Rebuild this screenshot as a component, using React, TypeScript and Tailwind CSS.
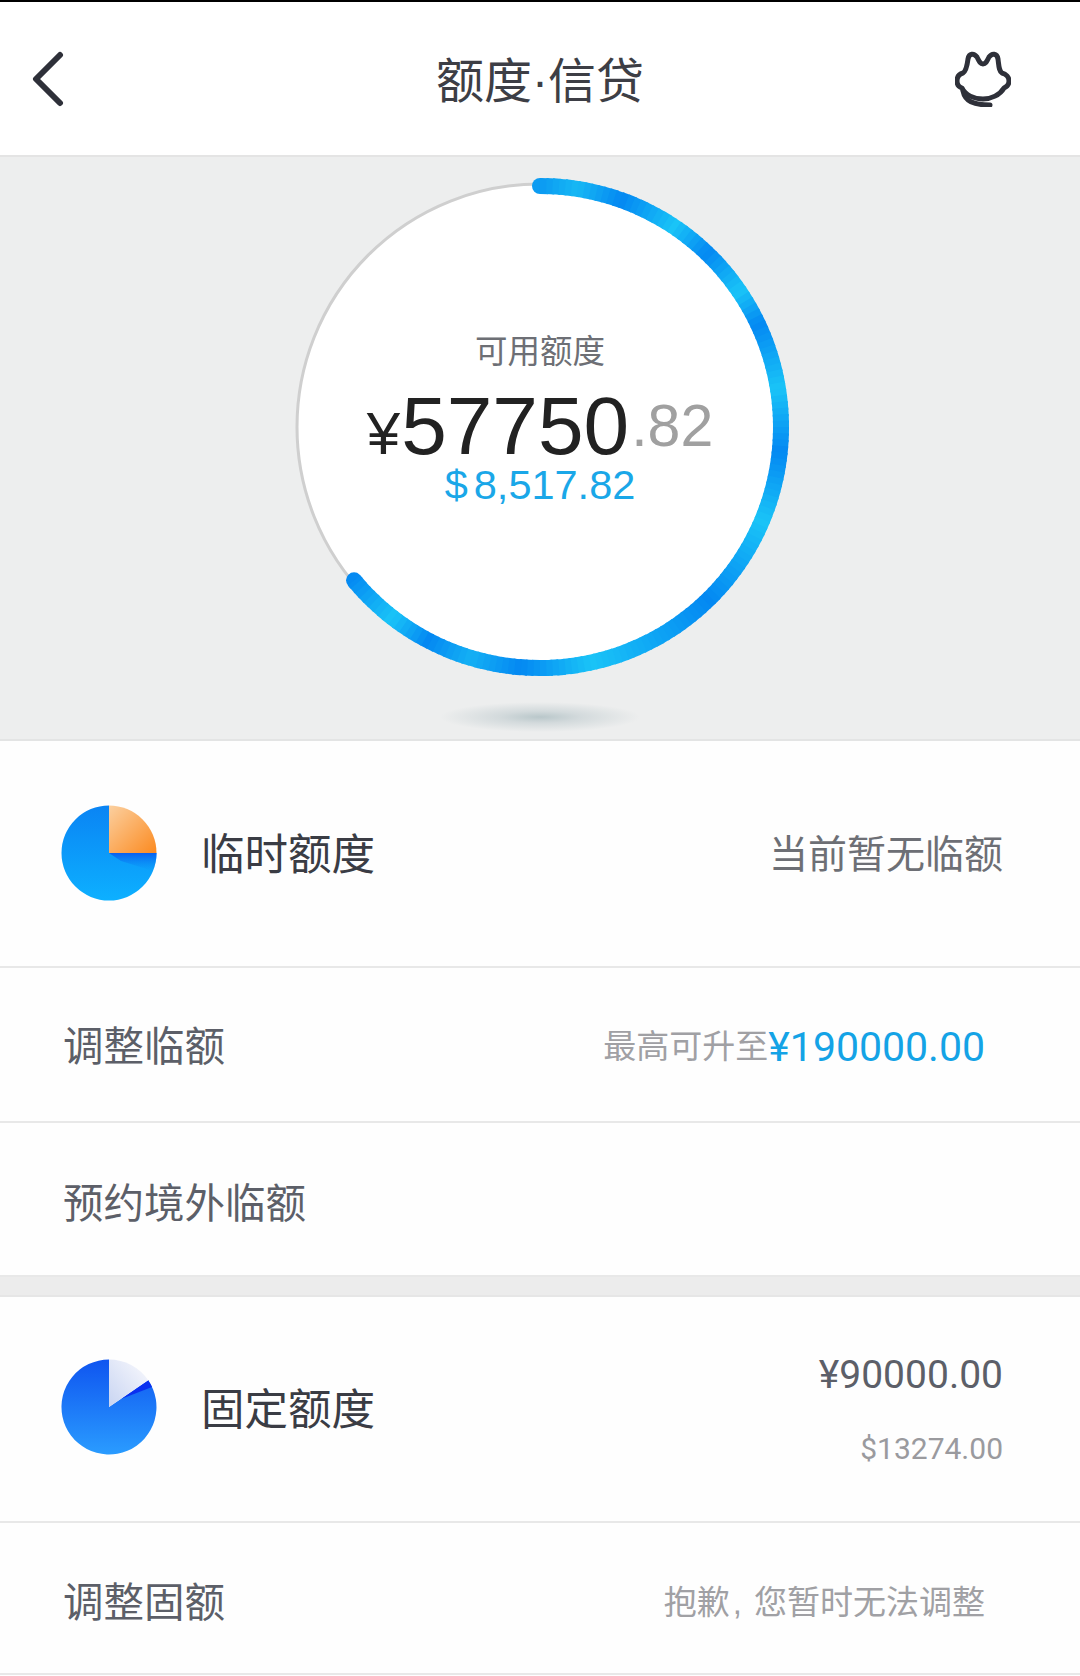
import React from 'react';

const cx = 270;
const cy = 270;
const r = 241;
const endAngle = 230.5;

// colour stops along the progress arc, angle in degrees from 12 o'clock
const stops: [number, string][] = [
    [0, '#0c9cf2'], [8, '#17b8f4'], [19, '#0488f2'], [33, '#1ac4f7'], [43, '#0488f2'], [55, '#1ac4f7'], [64, '#0488f2'],
    [80, '#1ac4f7'], [95, '#0488f2'], [112, '#1ac4f7'], [135, '#0488f2'], [167, '#1ac4f7'], [184, '#0488f2'],
    [196, '#14b0f4'], [207, '#0488f2'], [217, '#1ac4f7'], [231, '#0488f2'],
];

const hex = (c: string) => [1, 3, 5].map(i => parseInt(c.slice(i, i + 2), 16));

const colourAt = (a: number) => {
    for (let i = 1; i < stops.length; i++) {
        if (a <= stops[i][0]) {
            const t = (a - stops[i - 1][0]) / (stops[i][0] - stops[i - 1][0]);
            const c0 = hex(stops[i - 1][1]);
            const c1 = hex(stops[i][1]);
            return `rgb(${c0.map((v, k) => Math.round(v + (c1[k] - v) * t)).join(',')})`;
        }
    }
    return stops[stops.length - 1][1];
};

const point = (deg: number) => {
    const rad = (deg * Math.PI) / 180;
    return `${cx + r * Math.sin(rad)} ${cy - r * Math.cos(rad)}`;
};

const Ring: React.FC = () => {
    const segments = [];
    for (let a = 0; a < endAngle; a += 1.5) {
        segments.push(
            <path
                key={a}
                d={`M ${point(a)} A ${r} ${r} 0 0 1 ${point(Math.min(a + 2, endAngle))}`}
                stroke={colourAt(a)}
                strokeWidth={16}
                fill="none"
            />
        );
    }
    return (
        <svg width={540} height={540} viewBox="0 0 540 540" className="absolute left-0 top-0">
            <circle cx={cx} cy={cy} r={243} fill="#fff" stroke="#cfcfcf" strokeWidth={3} />
            <circle cx={point(0).split(' ')[0]} cy={point(0).split(' ')[1]} r={8} fill={colourAt(0)} />
            <circle cx={point(endAngle).split(' ')[0]} cy={point(endAngle).split(' ')[1]} r={8} fill={colourAt(endAngle)} />
            {segments}
        </svg>
    );
};

const Pie: React.FC<{ variant: 'temp' | 'fixed' }> = ({ variant }) => {
    if (variant === 'temp') {
        return (
            <svg width={96} height={96} viewBox="0 0 96 96" className="shrink-0 -translate-y-px">
                <defs>
                    <linearGradient id="tempBody" x1="0" y1="0" x2="0" y2="1">
                        <stop offset="0" stopColor="#0a84f4" />
                        <stop offset="1" stopColor="#0db0ff" />
                    </linearGradient>
                    <linearGradient id="tempSlice" x1="0" y1="0" x2="1" y2="1">
                        <stop offset="0" stopColor="#fbd0a0" />
                        <stop offset="1" stopColor="#fb8a20" />
                    </linearGradient>
                    <linearGradient id="tempEdge" x1="0" y1="0" x2="0" y2="1">
                        <stop offset="0" stopColor="#0a5ff0" />
                        <stop offset="1" stopColor="#0a8ff4" stopOpacity="0" />
                    </linearGradient>
                </defs>
                <path d="M48 0.5 A47.5 47.5 0 1 0 95.5 48 L48 48 Z" fill="url(#tempBody)" />
                <path d="M48 48 L95.5 48 A47.5 47.5 0 0 1 92 66 L60 56 Z" fill="url(#tempEdge)" />
                <path d="M48 48 L48 0.5 A47.5 47.5 0 0 1 95.5 48 Z" fill="url(#tempSlice)" />
            </svg>
        );
    }
    return (
        <svg width={96} height={96} viewBox="0 0 96 96" className="shrink-0 -translate-y-[2px]">
            <defs>
                <linearGradient id="fixedBody" x1="0" y1="0" x2="0" y2="1">
                    <stop offset="0" stopColor="#0f55f0" />
                    <stop offset="1" stopColor="#2a9cff" />
                </linearGradient>
                <linearGradient id="fixedSlice" x1="0" y1="1" x2="1" y2="0">
                    <stop offset="0" stopColor="#c8d4f2" />
                    <stop offset="1" stopColor="#fafafd" />
                </linearGradient>
            </defs>
            <path d="M48 0.5 A47.5 47.5 0 1 0 87.2 21.2 L48 48 Z" fill="url(#fixedBody)" />
            <path d="M60 40 L87.2 21.2 A47.5 47.5 0 0 1 91 28 Z" fill="#0a30f0" />
            <path d="M48 48 L48 0.5 A47.5 47.5 0 0 1 87.2 21.2 Z" fill="url(#fixedSlice)" />
        </svg>
    );
};

const BackIcon: React.FC = () => (
    <svg width={34} height={56} viewBox="0 0 34 56" fill="none" stroke="#2e3039" strokeWidth={6} strokeLinecap="round" strokeLinejoin="round">
        <path d="M30 4 L6 28 L30 52" />
    </svg>
);

const CatIcon: React.FC = () => (
    <svg width={56} height={56} viewBox="0 0 56 56" fill="none" stroke="#2e3039" strokeWidth={5} strokeLinecap="round" strokeLinejoin="round">
        <path d="M8 22 C11 20 12 16 13 8 C14 2 19 2 22 6 C24 10 25 13 28 13 C31 13 32 10 34 6 C37 2 42 2 43 8 C44 16 44 20 47 22 C51 23 54 26 54 30 C54 34 51 36 49 37 C45 44 36 48 28 48 C19 48 10 44 7 37 C4 36 2 34 2 30 C2 26 4 23 8 22 Z" />
        <path d="M8 40 C10 50 18 54 35 54" />
    </svg>
);

const DetailRow: React.FC<{ label: string; children?: React.ReactNode; size: string }> = ({ label, children, size }) => (
    <div className={`flex items-center justify-between pl-[63px] pr-[95px] border-b-2 border-[#e8e8e8] ${size}`}>
        <span className="text-[40.5px] text-[#5c5f68]">{label}</span>
        {children}
    </div>
);

export default function App() {
    return (
        <div className="w-[1080px] h-[1676px] overflow-hidden bg-[#fefefe] font-['Liberation_Sans','Noto_Sans_CJK_SC',sans-serif]">
            <div className="h-[2px] bg-black" />
            <header className="relative flex items-center justify-between h-[155px] pl-[30px] pr-[69px] bg-white border-b-2 border-[#e4e4e4]">
                <BackIcon />
                <h1 className="absolute left-0 right-0 top-[6px] bottom-0 flex items-center justify-center text-[48px] font-normal text-[#3d3e45]">额度·信贷</h1>
                <CatIcon />
            </header>

            <section className="relative h-[584px] bg-[#edeeee] border-b-2 border-[#e3e4e4]">
                <div className="relative w-[540px] h-[540px] mx-auto">
                    <Ring />
                    <div className="absolute left-0 right-0 top-[175px] text-center text-[32.5px] leading-[40px] text-[#6d6f75]">可用额度</div>
                    <div className="absolute left-0 right-0 top-[219px] flex justify-center items-baseline leading-[100px]">
                        <span className="mr-[1px] text-[60px] text-[#222]">¥</span>
                        <span className="text-[82px] text-[#222]">57750</span>
                        <span className="ml-[2px] -translate-y-[8px] text-[59px] text-[#a0a0a0]">.82</span>
                    </div>
                    <div className="absolute left-0 right-0 top-[303px] flex justify-center text-[41.5px] leading-[50px] text-[#1aa7e8]">
                        <span>$</span>
                        <span className="ml-[6px]">8,517.82</span>
                    </div>
                </div>
                <div className="absolute left-1/2 top-[545px] -translate-x-1/2 w-[200px] h-[30px] bg-[radial-gradient(ellipse_closest-side,#b9c7ca_0%,#d3dadc_40%,#edeeee_100%)]" />
            </section>

            <div className="flex items-center justify-between h-[227px] pl-[61px] pr-[77px] border-b-2 border-[#e8e8e8]">
                <div className="flex items-center gap-[44px]">
                    <Pie variant="temp" />
                    <span className="mt-[4px] text-[43.5px] text-[#3a3c44]">临时额度</span>
                </div>
                <span className="mt-[4px] text-[39px] text-[#6d6f75]">当前暂无临额</span>
            </div>

            <DetailRow label="调整临额" size="h-[155px] pt-[6px]">
                <span className="flex items-baseline">
                    <span className="-translate-y-[3px] text-[33px] text-[#a0a0a4]">最高可升至</span>
                    <span className="font-['Roboto'] text-[41px] text-[#14a3e6]">¥190000.00</span>
                </span>
            </DetailRow>
            <DetailRow label="预约境外临额" size="h-[154px] pt-[10px]" />

            <div className="h-[20px] bg-[#ececec] border-b-2 border-[#e6e6e6]" />

            <div className="flex items-center justify-between h-[226px] pl-[61px] pr-[77px] border-b-2 border-[#e8e8e8]">
                <div className="flex items-center gap-[44px]">
                    <Pie variant="fixed" />
                    <span className="mt-[4px] text-[43.5px] text-[#3a3c44]">固定额度</span>
                </div>
                <div className="flex flex-col items-end gap-[34px] pt-[2px]">
                    <span className="font-['Roboto'] text-[39px] leading-[44px] text-[#5c5f68]">¥90000.00</span>
                    <span className="font-['Roboto'] text-[30px] leading-[36px] text-[#9a9a9e]">$13274.00</span>
                </div>
            </div>

            <DetailRow label="调整固额" size="h-[152px] pt-[10px]">
                <span className="text-[33px] text-[#a0a0a4]">
                    抱歉<span className="mx-[3px]">,</span> 您暂时无法调整
                </span>
            </DetailRow>
        </div>
    );
}
